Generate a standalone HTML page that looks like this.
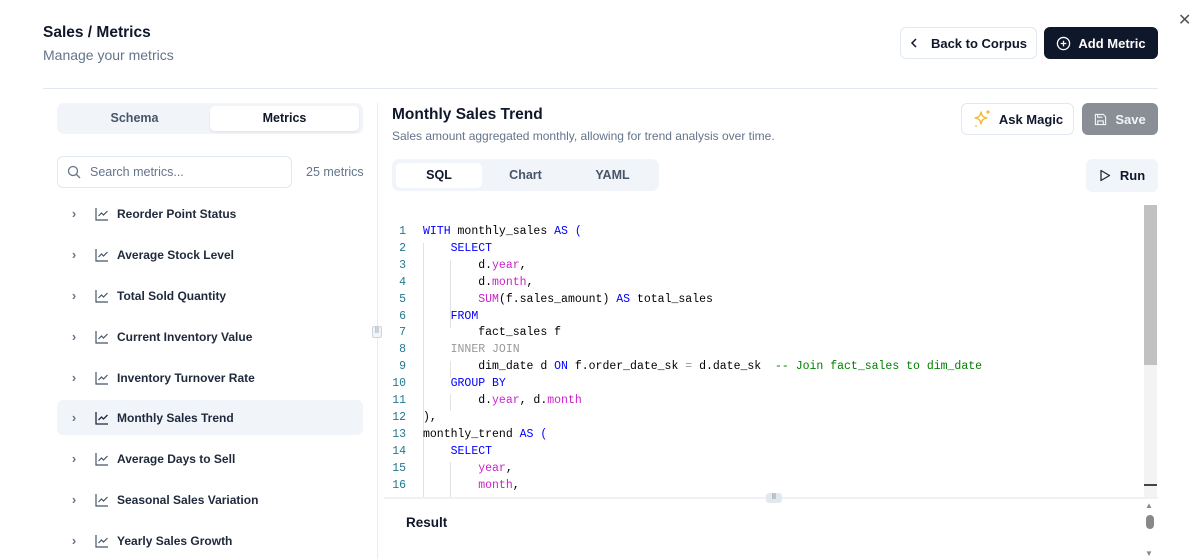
<!DOCTYPE html>
<html><head><meta charset="utf-8"><style>
*{box-sizing:border-box;margin:0;padding:0}
body{width:1200px;height:559px;overflow:hidden;background:#fff;font-family:"Liberation Sans",sans-serif;color:#0f172a;position:relative}
.a{position:absolute}
.btn{position:absolute;border:1px solid #e2e8f0;border-radius:6px;display:flex;align-items:center;justify-content:center;font-size:13px;font-weight:600}
.row{position:absolute;left:57px;width:306px;height:35px;display:flex;align-items:center;font-size:12px;font-weight:600;color:#1e293b;border-radius:6px}
.row .ch{width:30px;text-align:center;color:#64748b;font-size:13px;padding-left:4px}
.row svg{margin:0 8px 0 8px}
.code{position:absolute;top:224px;font-family:"Liberation Mono",monospace;font-size:11.5px;line-height:16.9px;white-space:pre}
.k{color:#0000ff}.p{color:#cc22cc}.g{color:#999}.c{color:#008000}
</style></head><body>
<div class="a" style="left:43px;top:24px;font-size:15.5px;font-weight:600">Sales&nbsp;/&nbsp;Metrics</div>
<div class="a" style="left:43px;top:47px;font-size:14px;color:#64748b">Manage your metrics</div>
<div class="a" style="left:1178px;top:10px;font-size:16px;color:#555">✕</div>
<div class="btn" style="left:900px;top:27px;width:137px;height:32px;color:#0f172a"><svg width="8" height="10" viewBox="0 0 8 10" style="margin-right:13px"><path d="M6 1L2 5l4 4" fill="none" stroke="#0f172a" stroke-width="1.5"/></svg>Back to Corpus</div>
<div class="btn" style="left:1044px;top:27px;width:114px;height:32px;background:#0f172a;border-color:#0f172a;color:#fff"><svg width="15" height="15" viewBox="0 0 16 16" style="margin-right:7px"><circle cx="8" cy="8" r="6.5" fill="none" stroke="#fff" stroke-width="1.4"/><path d="M8 5v6M5 8h6" stroke="#fff" stroke-width="1.4"/></svg>Add Metric</div>
<div class="a" style="left:43px;top:88px;width:1115px;height:1px;background:#e2e8f0"></div>
<div class="a" style="left:377px;top:103px;width:1px;height:456px;background:#e9edf2"></div>
<div class="a" style="left:372px;top:326px;width:10px;height:12px;border:1px solid #cbd5e1;border-radius:2px;background:#f1f5f9;font-size:7px;text-align:center;color:#666">⠿</div>
<div class="a" style="left:57px;top:103px;width:306px;height:31px;background:#f1f5f9;border-radius:7px"></div>
<div class="a" style="left:57px;top:111px;width:155px;text-align:center;font-size:12.5px;color:#475569;font-weight:600">Schema</div>
<div class="a" style="left:210px;top:106px;width:149px;height:25px;background:#fff;border-radius:5px;box-shadow:0 1px 2px rgba(0,0,0,.08);text-align:center;line-height:25px;font-size:12.5px;font-weight:600">Metrics</div>
<div class="a" style="left:57px;top:156px;width:235px;height:32px;border:1px solid #e2e8f0;border-radius:6px"></div>
<svg class="a" style="left:67px;top:165px" width="14" height="14" viewBox="0 0 14 14"><circle cx="6" cy="6" r="4.5" fill="none" stroke="#64748b" stroke-width="1.3"/><path d="M9.5 9.5L13 13" stroke="#64748b" stroke-width="1.3"/></svg>
<div class="a" style="left:90px;top:165px;font-size:12.5px;color:#64748b">Search metrics...</div>
<div class="a" style="left:306px;top:165px;font-size:12.5px;color:#64748b">25 metrics</div>
<div class="row" style="top:196px"><span class="ch">›</span><svg width="14" height="14" viewBox="0 0 14 14"><path d="M1 1v12h12M3.5 9l3-3 2 2 4-4" fill="none" stroke="#475569" stroke-width="1.2"/></svg>Reorder Point Status</div>
<div class="row" style="top:237px"><span class="ch">›</span><svg width="14" height="14" viewBox="0 0 14 14"><path d="M1 1v12h12M3.5 9l3-3 2 2 4-4" fill="none" stroke="#475569" stroke-width="1.2"/></svg>Average Stock Level</div>
<div class="row" style="top:278px"><span class="ch">›</span><svg width="14" height="14" viewBox="0 0 14 14"><path d="M1 1v12h12M3.5 9l3-3 2 2 4-4" fill="none" stroke="#475569" stroke-width="1.2"/></svg>Total Sold Quantity</div>
<div class="row" style="top:319px"><span class="ch">›</span><svg width="14" height="14" viewBox="0 0 14 14"><path d="M1 1v12h12M3.5 9l3-3 2 2 4-4" fill="none" stroke="#475569" stroke-width="1.2"/></svg>Current Inventory Value</div>
<div class="row" style="top:360px"><span class="ch">›</span><svg width="14" height="14" viewBox="0 0 14 14"><path d="M1 1v12h12M3.5 9l3-3 2 2 4-4" fill="none" stroke="#475569" stroke-width="1.2"/></svg>Inventory Turnover Rate</div>
<div class="row" style="top:400px;background:#f1f5f9"><span class="ch">›</span><svg width="14" height="14" viewBox="0 0 14 14"><path d="M1 1v12h12M3.5 9l3-3 2 2 4-4" fill="none" stroke="#1e293b" stroke-width="1.3"/></svg>Monthly Sales Trend</div>
<div class="row" style="top:441px"><span class="ch">›</span><svg width="14" height="14" viewBox="0 0 14 14"><path d="M1 1v12h12M3.5 9l3-3 2 2 4-4" fill="none" stroke="#475569" stroke-width="1.2"/></svg>Average Days to Sell</div>
<div class="row" style="top:482px"><span class="ch">›</span><svg width="14" height="14" viewBox="0 0 14 14"><path d="M1 1v12h12M3.5 9l3-3 2 2 4-4" fill="none" stroke="#475569" stroke-width="1.2"/></svg>Seasonal Sales Variation</div>
<div class="row" style="top:523px"><span class="ch">›</span><svg width="14" height="14" viewBox="0 0 14 14"><path d="M1 1v12h12M3.5 9l3-3 2 2 4-4" fill="none" stroke="#475569" stroke-width="1.2"/></svg>Yearly Sales Growth</div>

<div class="a" style="left:392px;top:106px;font-size:15.5px;font-weight:600">Monthly Sales Trend</div>
<div class="a" style="left:392px;top:129px;font-size:12px;color:#64748b">Sales amount aggregated monthly, allowing for trend analysis over time.</div>
<div class="btn" style="left:961px;top:103px;width:113px;height:32px"><svg width="20" height="20" viewBox="0 0 20 20" style="margin-right:7px"><path d="M9 3c.8 4 2 5.2 6 6-4 .8-5.2 2-6 6-.8-4-2-5.2-6-6 4-.8 5.2-2 6-6z" fill="none" stroke="#f5b82e" stroke-width="1.4" stroke-linejoin="round"/><path d="M16 1v4M14 3h4" stroke="#f5b82e" stroke-width="1.2"/><circle cx="4" cy="17" r=".9" fill="#f5b82e"/></svg>Ask Magic</div>
<div class="btn" style="left:1082px;top:103px;width:76px;height:32px;background:#8a8f97;border-color:#8a8f97;color:#f1f5f9"><svg width="13" height="13" viewBox="0 0 14 14" style="margin-right:8px"><path d="M1.5 1.5h8.5l2.5 2.5v8.5h-11z M4 12.5v-4h6v4M4 1.5v3h5" fill="none" stroke="#f1f5f9" stroke-width="1.2"/></svg>Save</div>
<div class="a" style="left:392px;top:159px;width:267px;height:32px;background:#f1f5f9;border-radius:7px"></div>
<div class="a" style="left:396px;top:163px;width:86px;height:25px;background:#fff;border-radius:5px;text-align:center;line-height:25px;font-size:12.5px;font-weight:600">SQL</div>
<div class="a" style="left:482px;top:168px;width:87px;text-align:center;font-size:12.5px;color:#475569;font-weight:600">Chart</div>
<div class="a" style="left:569px;top:168px;width:87px;text-align:center;font-size:12.5px;color:#475569;font-weight:600">YAML</div>
<div class="btn" style="left:1086px;top:159px;width:72px;height:33px;background:#f1f5f9;border-color:#f1f5f9"><svg width="12" height="13" viewBox="0 0 12 13" style="margin-right:9px"><path d="M2 1.5l8.5 5-8.5 5z" fill="none" stroke="#1e293b" stroke-width="1.3" stroke-linejoin="round"/></svg>Run</div>

<div class="a" style="left:423px;top:243px;width:1px;height:254px;background:#e2e2e2"></div>
<div class="a" style="left:450px;top:260px;width:1px;height:68px;background:#e2e2e2"></div>
<div class="a" style="left:450px;top:361px;width:1px;height:17px;background:#e2e2e2"></div>
<div class="a" style="left:450px;top:394px;width:1px;height:17px;background:#e2e2e2"></div>
<div class="a" style="left:450px;top:462px;width:1px;height:35px;background:#e2e2e2"></div>
<div class="code" style="left:388px;color:#237893;width:18px;text-align:right">1
2
3
4
5
6
7
8
9
10
11
12
13
14
15
16</div>
<div class="code" style="left:423px;color:#000"><span class="k">WITH</span> monthly_sales <span class="k">AS</span> <span class="k">(</span>
    <span class="k">SELECT</span>
        d.<span class="p">year</span>,
        d.<span class="p">month</span>,
        <span class="p">SUM</span>(f.sales_amount) <span class="k">AS</span> total_sales
    <span class="k">FROM</span>
        fact_sales f
    <span class="g">INNER JOIN</span>
        dim_date d <span class="k">ON</span> f.order_date_sk <span class="g">=</span> d.date_sk  <span class="c">-- Join fact_sales to dim_date</span>
    <span class="k">GROUP BY</span>
        d.<span class="p">year</span>, d.<span class="p">month</span>
),
monthly_trend <span class="k">AS</span> <span class="k">(</span>
    <span class="k">SELECT</span>
        <span class="p">year</span>,
        <span class="p">month</span>,</div>
<div class="a" style="left:1144px;top:205px;width:13px;height:292px;background:#f3f3f3"></div>
<div class="a" style="left:1144px;top:205px;width:13px;height:160px;background:#c1c1c1"></div>
<div class="a" style="left:1144px;top:484px;width:13px;height:2px;background:#444"></div>
<div class="a" style="left:384px;top:497px;width:774px;height:2px;background:#eef1f5"></div>
<div class="a" style="left:766px;top:493px;width:16px;height:10px;background:#e2e8f0;border-radius:3px;font-size:7px;text-align:center;line-height:10px;color:#555">⠿</div>
<div class="a" style="left:406px;top:515px;font-size:13.5px;font-weight:600">Result</div>
<div class="a" style="left:1145px;top:501px;font-size:8px;color:#888">▲</div>
<div class="a" style="left:1146px;top:515px;width:8px;height:14px;background:#888;border-radius:4px"></div>
<div class="a" style="left:1145px;top:549px;font-size:8px;color:#888">▼</div>
</body></html>
